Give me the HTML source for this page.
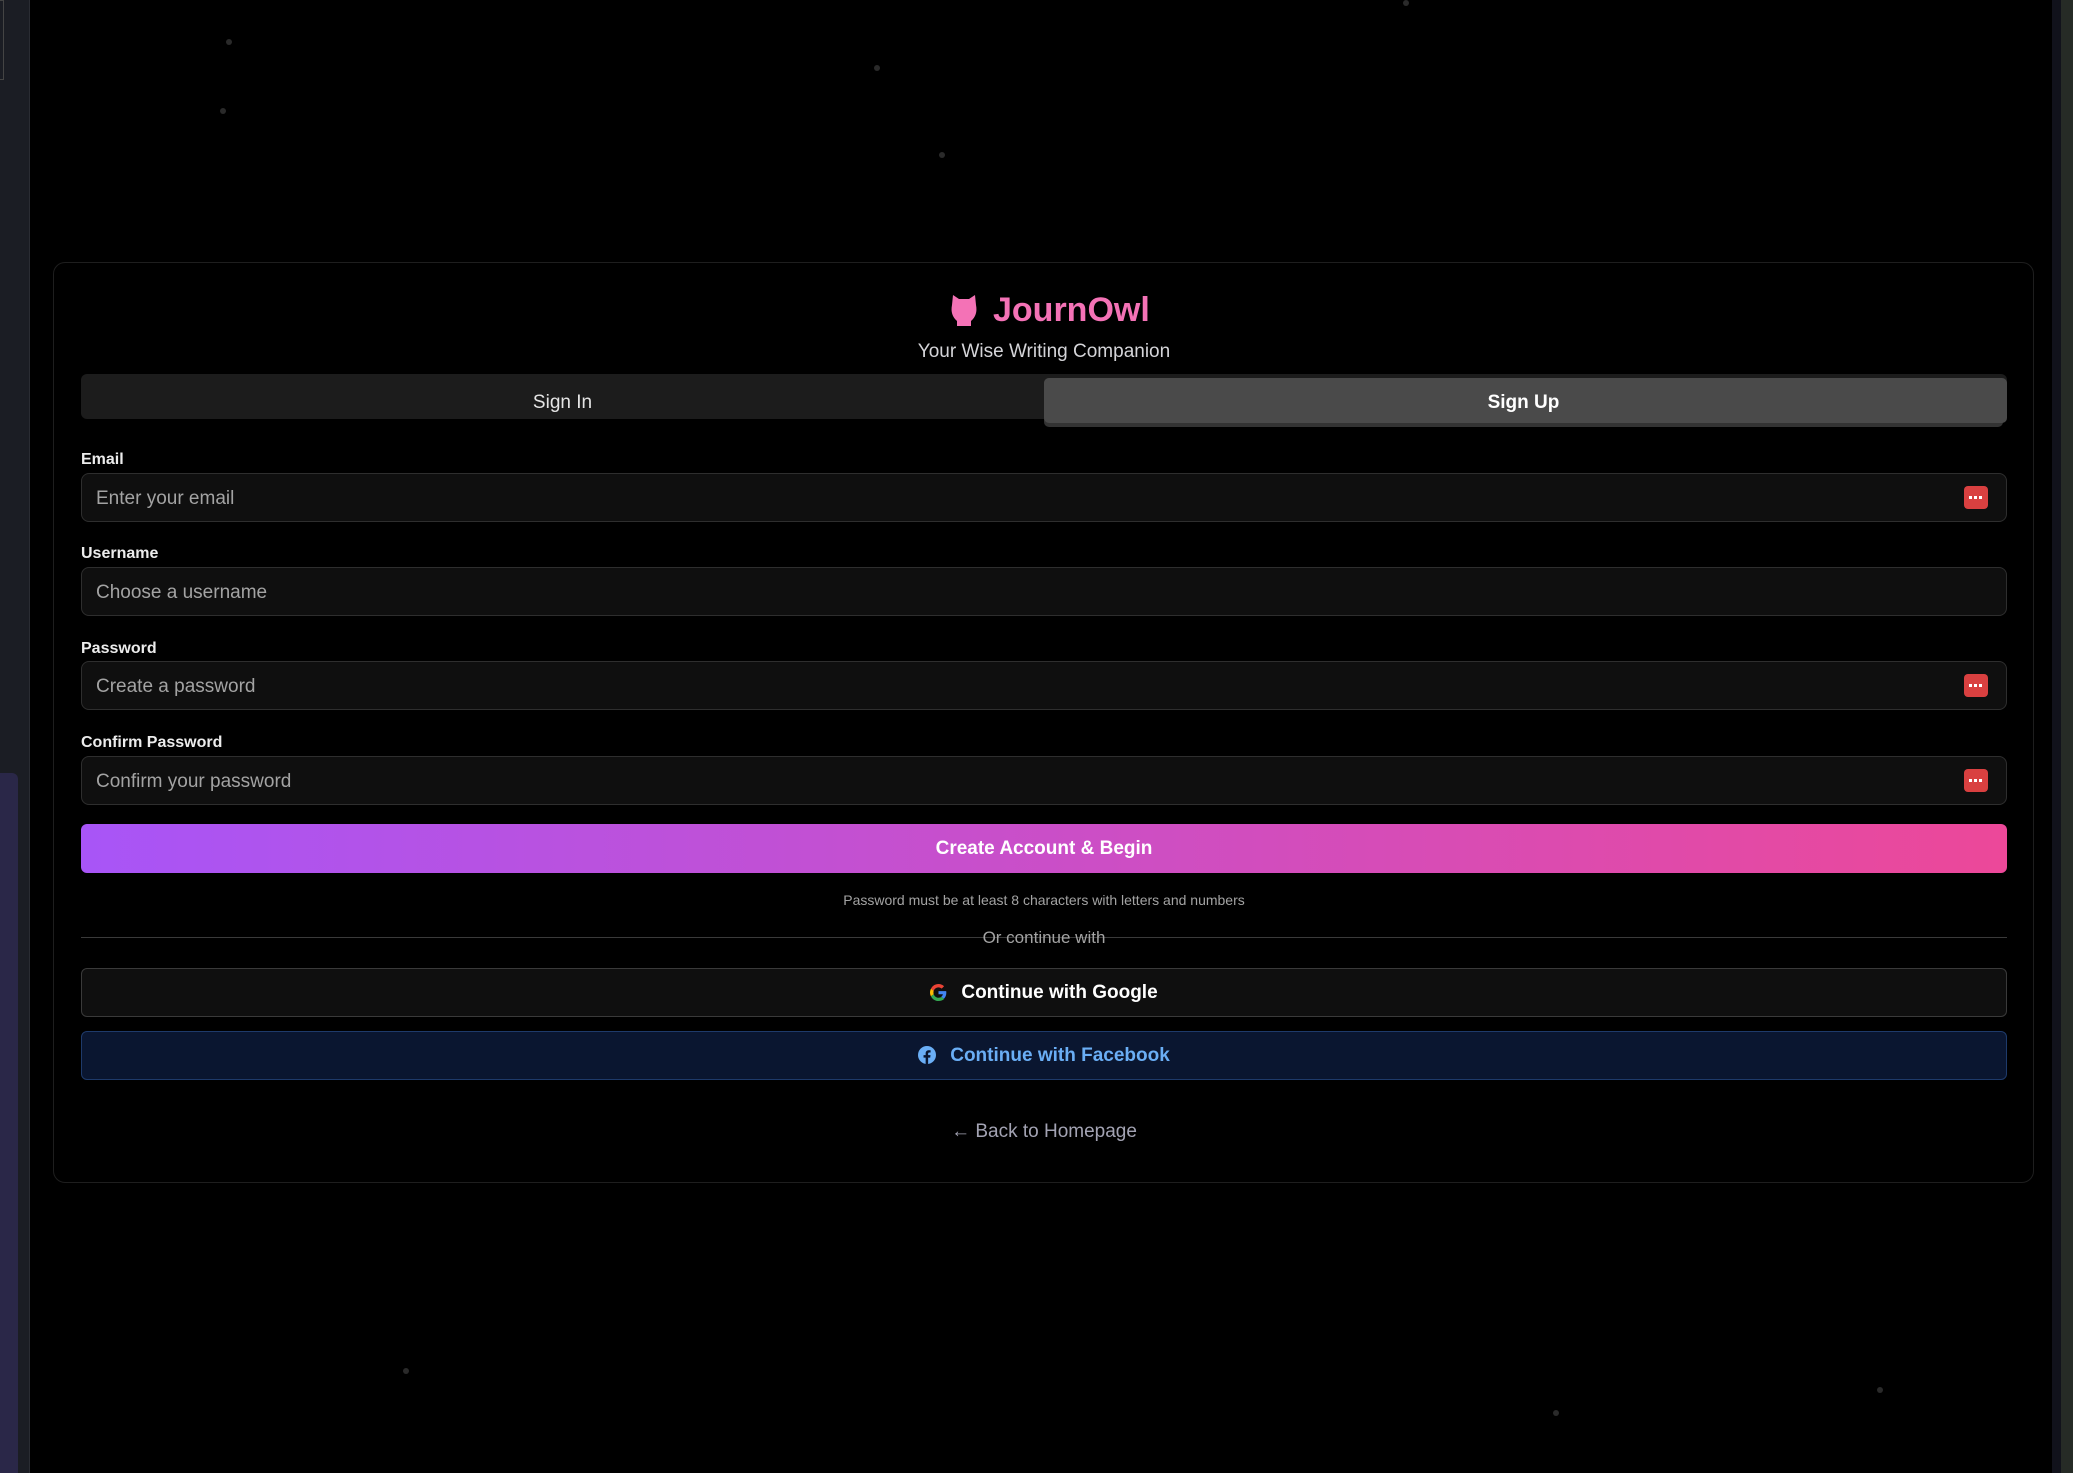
<!DOCTYPE html>
<html><head><meta charset="utf-8"><style>
*{box-sizing:border-box;margin:0;padding:0}
body{width:2073px;height:1473px;background:#000;position:relative;overflow:hidden;font-family:"Liberation Sans",sans-serif;color:#e5e5e5}
.a{position:absolute}
.lbl{position:absolute;left:81px;font-size:16px;font-weight:bold;color:#ececec}
.inp{position:absolute;left:81px;width:1926px;height:49px;background:#0f0f0f;border:1px solid #2e2e2e;border-radius:8px;font-size:19px;color:#a3a3a3;padding-left:14px;line-height:49px}
.red{position:absolute;right:18px;top:12px;width:24px;height:23px;background:#d94040;border-radius:4px}
.red:after{content:"";position:absolute;left:5px;top:10px;width:3px;height:3px;background:#fff;box-shadow:5px 0 #fff,10px 0 #fff}
.dot{position:absolute;width:6px;height:6px;border-radius:50%;background:#2a2a2a}
.btn{position:absolute;left:81px;width:1926px;height:49px;border-radius:6px;text-align:center;line-height:47px;font-size:19px;font-weight:bold}
</style></head><body>
<div class="a" style="left:0;top:0;width:30px;height:1473px;background:#1b1d24;border-right:1px solid #2a2c33"></div>
<div class="a" style="left:0;top:773px;width:18px;height:700px;background:#2a2748;border-radius:0 6px 0 0"></div>
<div class="a" style="left:0;top:0;width:4px;height:80px;border:1px solid #444;border-left:none"></div>
<div class="a" style="left:2052px;top:0;width:9px;height:1473px;background:#11121b"></div>
<div class="a" style="left:2061px;top:0;width:12px;height:1473px;background:#262b26"></div>
<div class="dot" style="left:226px;top:39px"></div><div class="dot" style="left:220px;top:108px"></div>
<div class="dot" style="left:874px;top:65px"></div><div class="dot" style="left:939px;top:152px"></div>
<div class="dot" style="left:1403px;top:0px"></div><div class="dot" style="left:403px;top:1368px"></div>
<div class="dot" style="left:1877px;top:1387px"></div><div class="dot" style="left:1553px;top:1410px"></div>

<div class="a" style="left:53px;top:262px;width:1981px;height:921px;border:1px solid #1e1e1e;border-radius:12px;background:#000"></div>

<svg class="a" style="left:950px;top:293px" width="28" height="34" viewBox="0 0 28 34"><path d="M3 2 L9 6 L19 6 L25 2 L26 12 Q28 22 21 28 L21 33 L7 33 L7 28 Q0 22 2 12 Z" fill="#f472b6"/></svg>
<div class="a" style="left:993px;top:291px;font-size:34px;font-weight:bold;color:#f472b6">JournOwl</div>
<div class="a" style="left:0;width:2088px;top:341px;text-align:center;font-size:19px;color:#d4d4d8">Your Wise Writing Companion</div>

<div class="a" style="left:81px;top:374px;width:1926px;height:45px;background:#1c1c1c;border-radius:6px"></div>
<div class="a" style="left:1044px;top:378px;width:959px;height:49px;background:#333;border-radius:5px"></div>
<div class="a" style="left:1044px;top:378px;width:963px;height:45px;background:#4a4a4a;border-radius:5px"></div>
<div class="a" style="left:81px;width:963px;top:392px;text-align:center;font-size:19px;color:#e5e5e5">Sign In</div>
<div class="a" style="left:1044px;width:959px;top:392px;text-align:center;font-size:19px;font-weight:bold;color:#fff">Sign Up</div>

<div class="lbl" style="top:451px">Email</div>
<div class="inp" style="top:473px">Enter your email<div class="red"></div></div>
<div class="lbl" style="top:545px">Username</div>
<div class="inp" style="top:567px">Choose a username</div>
<div class="lbl" style="top:640px">Password</div>
<div class="inp" style="top:661px">Create a password<div class="red"></div></div>
<div class="lbl" style="top:734px">Confirm Password</div>
<div class="inp" style="top:756px">Confirm your password<div class="red"></div></div>

<div class="btn" style="top:824px;background:linear-gradient(90deg,#a855f7,#ec4899);color:#fff;line-height:49px">Create Account &amp; Begin</div>
<div class="a" style="left:0;width:2088px;top:892px;text-align:center;font-size:14px;color:#a3a3a3">Password must be at least 8 characters with letters and numbers</div>
<div class="a" style="left:81px;top:937px;width:1926px;height:1px;background:#3a3a3a"></div>
<div class="a" style="left:0;width:2088px;top:928px;text-align:center;font-size:17px;color:#a3a3a3">Or continue with</div>

<div class="btn" style="top:968px;background:#0f0f0f;border:1px solid #3a3a3a;color:#fff">
<svg style="vertical-align:-3px;margin-right:14px" width="17" height="17" viewBox="0 0 48 48"><path fill="#EA4335" d="M24 9.5c3.5 0 6.6 1.2 9 3.5l6.7-6.7C35.6 2.4 30.2 0 24 0 14.6 0 6.6 5.4 2.7 13.3l7.8 6C12.4 13.7 17.7 9.5 24 9.5z"/><path fill="#4285F4" d="M46.1 24.5c0-1.6-.1-3.1-.4-4.5H24v9h12.4c-.5 2.9-2.2 5.3-4.6 7l7.5 5.8c4.4-4 6.8-10 6.8-17.3z"/><path fill="#FBBC05" d="M10.5 28.7c-.5-1.4-.8-3-.8-4.7s.3-3.2.8-4.7l-7.8-6C1 16.6 0 20.2 0 24s1 7.4 2.7 10.7l7.8-6z"/><path fill="#34A853" d="M24 48c6.5 0 11.9-2.1 15.9-5.8l-7.5-5.8c-2.1 1.4-4.8 2.3-8.4 2.3-6.3 0-11.6-4.2-13.5-9.9l-7.8 6C6.6 42.6 14.6 48 24 48z"/></svg>Continue with Google</div>
<div class="btn" style="top:1031px;background:#0a1630;border:1px solid #1e3a6a;color:#6aaef5">
<svg style="vertical-align:-3px;margin-right:14px" width="18" height="18" viewBox="0 0 24 24"><circle cx="12" cy="12" r="12" fill="#6aaef5"/><path d="M13.5 24v-8.5h2.8l.4-3.3h-3.2v-2c0-.9.3-1.6 1.6-1.6h1.7V5.7c-.3 0-1.3-.1-2.5-.1-2.5 0-4.1 1.5-4.1 4.2v2.4H7.4v3.3h2.8V24z" fill="#0a1630"/></svg>Continue with Facebook</div>

<div class="a" style="left:0;width:2088px;top:1121px;text-align:center;font-size:19px;color:#a3a3b3">← Back to Homepage</div>
</body></html>
